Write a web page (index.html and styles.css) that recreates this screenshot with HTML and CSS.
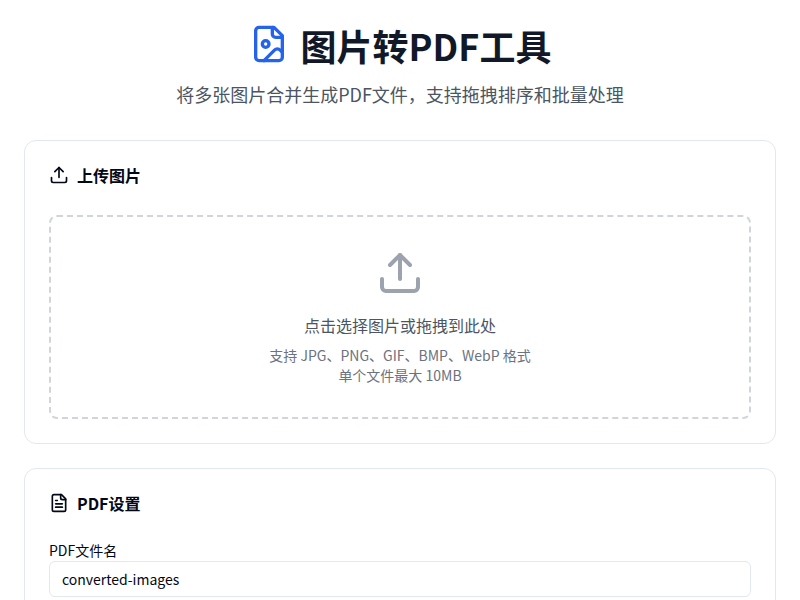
FILE: index.html
```html
<!DOCTYPE html>
<html lang="zh-CN">
<head>
<meta charset="utf-8">
<title>图片转PDF工具</title>
<link rel="stylesheet" href="styles.css">
</head>
<body>
<main class="page">
  <header class="hero">
    <h1 class="title">
      <svg class="title-icon" viewBox="0 0 24 24"><path d="M15 2H6a2 2 0 0 0-2 2v16a2 2 0 0 0 2 2h12a2 2 0 0 0 2-2V7Z"/><path d="M14 2v4a2 2 0 0 0 2 2h4"/><circle cx="10" cy="12" r="2"/><path d="m20 17-1.296-1.296a2.41 2.41 0 0 0-3.408 0L9 22"/></svg>
      <span>图片转PDF工具</span>
    </h1>
    <p class="subtitle">将多张图片合并生成PDF文件，支持拖拽排序和批量处理</p>
  </header>

  <section class="card">
    <h2 class="card-title">
      <svg class="card-icon" viewBox="0 0 24 24"><path d="M21 15v4a2 2 0 0 1-2 2H5a2 2 0 0 1-2-2v-4"/><polyline points="17 8 12 3 7 8"/><line x1="12" y1="3" x2="12" y2="15"/></svg>
      <span>上传图片</span>
    </h2>
    <div class="dropzone">
      <svg class="drop-icon" viewBox="0 0 24 24"><path d="M21 15v4a2 2 0 0 1-2 2H5a2 2 0 0 1-2-2v-4"/><polyline points="17 8 12 3 7 8"/><line x1="12" y1="3" x2="12" y2="15"/></svg>
      <p class="drop-main">点击选择图片或拖拽到此处</p>
      <p class="drop-hint">支持 JPG、PNG、GIF、BMP、WebP 格式</p>
      <p class="drop-hint">单个文件最大 10MB</p>
    </div>
  </section>

  <section class="card">
    <h2 class="card-title settings-title">
      <svg class="card-icon" viewBox="0 0 24 24"><path d="M15 2H6a2 2 0 0 0-2 2v16a2 2 0 0 0 2 2h12a2 2 0 0 0 2-2V7Z"/><path d="M14 2v4a2 2 0 0 0 2 2h4"/><path d="M10 9H8"/><path d="M16 13H8"/><path d="M16 17H8"/></svg>
      <span>PDF设置</span>
    </h2>
    <label class="field-label" for="name">PDF文件名</label>
    <input class="field-input" id="name" type="text" value="converted-images">
  </section>
</main>
</body>
</html>
```
FILE: styles.css
```css
* { box-sizing: border-box; }
html, body { margin: 0; padding: 0; background: #ffffff; }
body {
  font-family: "Noto Sans CJK SC", "Noto Sans", sans-serif;
  color: #020817;
  height: 600px;
  overflow: hidden;
}
.page { padding: 16px 24px 0; height: 600px; overflow: hidden; }
.hero { text-align: center; margin-bottom: 32px; }
.title {
  display: flex;
  align-items: center;
  justify-content: center;
  gap: 12px;
  margin: 0 0 6px;
  font-size: 36px;
  line-height: 58px;
  font-weight: 700;
  color: #111827;
}
.title-icon {
  width: 40px;
  height: 40px;
  margin-bottom: 3px;
  fill: none;
  stroke: #2563eb;
  stroke-width: 2;
  stroke-linecap: round;
  stroke-linejoin: round;
}
.subtitle { margin: 0; font-size: 18px; line-height: 28px; color: #4b5563; }
.card {
  background: #fff;
  border: 1px solid #e2e8f0;
  border-radius: 12px;
  padding: 24px;
  margin-bottom: 24px;
}
.card-title {
  display: flex;
  align-items: center;
  gap: 8px;
  margin: 0 0 30px;
  font-size: 16px;
  line-height: 20px;
  font-weight: 700;
  color: #020817;
}
.settings-title { margin-bottom: 27px; }
.card-icon {
  width: 20px;
  height: 20px;
  fill: none;
  stroke: currentColor;
  stroke-width: 2;
  stroke-linecap: round;
  stroke-linejoin: round;
}
.dropzone {
  border: 2px dashed #d1d5db;
  border-radius: 8px;
  padding: 32px;
  text-align: center;
  display: flex;
  flex-direction: column;
  align-items: center;
}
.drop-icon {
  width: 48px;
  height: 48px;
  fill: none;
  stroke: #9ca3af;
  stroke-width: 2;
  stroke-linecap: round;
  stroke-linejoin: round;
  margin-bottom: 16px;
}
.drop-main { margin: 0 0 8px; font-size: 16px; line-height: 24px; color: #4b5563; }
.drop-hint { margin: 0; font-size: 14px; line-height: 20px; color: #6b7280; }
.field-label { display: block; font-size: 14px; line-height: 20px; color: #020817; margin-bottom: 1px; }
.field-input {
  display: block;
  width: 100%;
  height: 36px;
  padding: 0 12px;
  border: 1px solid #e2e8f0;
  border-radius: 6px;
  font: inherit;
  font-size: 14px;
  color: #020817;
  background: #fff;
}
```
